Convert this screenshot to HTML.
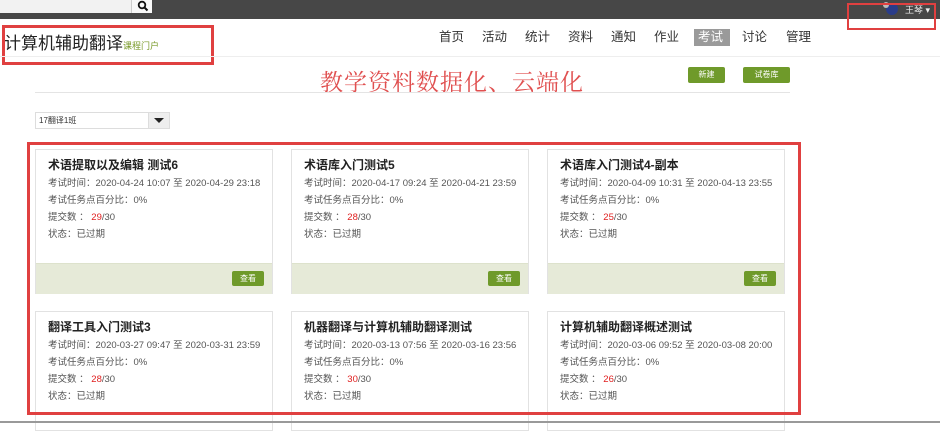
<!DOCTYPE html>
<html><head><meta charset="utf-8"><style>
*{margin:0;padding:0;box-sizing:border-box}
body{width:940px;height:424px;overflow:hidden;background:#fff;font-family:"Liberation Sans","Noto Sans CJK SC",sans-serif;position:relative;color:#333}
.a{position:absolute}
.top{left:0;top:0;width:940px;height:19px;background:#474747}
.card{position:absolute;width:238px;background:#fff;border:1px solid #e2e2e2}
.card h3{position:absolute;left:12px;top:6px;font-size:12px;font-weight:bold;color:#222}
.card p{position:absolute;left:12px;font-size:9.5px;color:#555;white-space:nowrap}
.card .r{color:#e02020}
.foot{position:absolute;left:0;right:0;top:113px;height:31px;background:#e6ead8;border-top:1px solid #dde2cc}
.btn{position:absolute;background:#6f9a2a;color:#fff;font-size:8px;text-align:center;border-radius:2px}
.nav{position:absolute;top:29px;font-size:12.5px;line-height:17px;color:#333}
</style></head><body>
<div class="a top"></div>
<div class="a" style="left:0;top:0;width:131px;height:13px;background:#f2f2f2"></div>
<div class="a" style="left:131px;top:0;width:21px;height:13px;background:#f8f8f8;border-left:1px solid #ccc"></div>
<svg class="a" style="left:136px;top:0" width="14" height="13"><circle cx="6" cy="5" r="3.3" fill="none" stroke="#111" stroke-width="1.8"/><path d="M8.5 7.5 L11.5 10.5" stroke="#111" stroke-width="2"/></svg>
<div class="a" style="left:886px;top:3px;width:12px;height:12px;border-radius:50%;background:#2a3c8a"></div>
<div class="a" style="left:883px;top:2px;width:6px;height:6px;border-radius:50%;background:#bbb"></div>
<div class="a" style="left:905px;top:3px;font-size:9px;color:#eee">王琴 ▾</div>
<div class="a" style="left:847px;top:3px;width:89px;height:27px;border:2px solid #e04040"></div>

<div class="a" style="left:4px;top:29px;font-size:17px;color:#222">计算机辅助翻译<span style="font-size:9px;color:#7a9a2a">课程门户</span></div>
<div class="a" style="left:2px;top:25px;width:212px;height:40px;border:3px solid #e04040"></div>

<div class="nav" style="left:439px">首页</div>
<div class="nav" style="left:482px">活动</div>
<div class="nav" style="left:525px">统计</div>
<div class="nav" style="left:568px">资料</div>
<div class="nav" style="left:611px">通知</div>
<div class="nav" style="left:654px">作业</div>
<div class="a" style="left:694px;top:29px;width:36px;height:17px;background:#9a9a9a"></div>
<div class="nav" style="left:698px;color:#fff">考试</div>
<div class="nav" style="left:742px">讨论</div>
<div class="nav" style="left:786px">管理</div>
<div class="a" style="left:0;top:56px;width:940px;height:1px;background:#eee"></div>

<div class="a" style="left:320px;top:64px;font-size:23px;color:#e05050;font-family:'Noto Serif CJK SC',serif;letter-spacing:1px">教学资料数据化、云端化</div>
<div class="btn" style="left:688px;top:67px;width:37px;height:16px;line-height:16px">新建</div>
<div class="btn" style="left:743px;top:67px;width:47px;height:16px;line-height:16px">试卷库</div>
<div class="a" style="left:35px;top:92px;width:755px;height:1px;background:#e4e4e4"></div>

<div class="a" style="left:35px;top:112px;width:135px;height:17px;border:1px solid #ddd;font-size:8px;line-height:15px;padding-left:3px">17翻译1班</div>
<div class="a" style="left:148px;top:112px;width:22px;height:17px;background:#eee;border:1px solid #ddd"></div>
<div class="a" style="left:154px;top:118px;width:0;height:0;border-left:5px solid transparent;border-right:5px solid transparent;border-top:5px solid #222"></div>

<div class="card" style="left:35px;top:149px;height:145px"><h3>术语提取以及编辑 测试6</h3><p style="top:25px">考试时间：2020-04-24 10:07 至 2020-04-29 23:18</p><p style="top:42px">考试任务点百分比：0%</p><p style="top:59px">提交数 ： <span class="r">29</span>/30</p><p style="top:76px">状态：已过期</p><div class="foot"></div><div class="btn" style="left:196px;top:121px;width:32px;height:15px;line-height:15px">查看</div></div>
<div class="card" style="left:291px;top:149px;height:145px"><h3>术语库入门测试5</h3><p style="top:25px">考试时间：2020-04-17 09:24 至 2020-04-21 23:59</p><p style="top:42px">考试任务点百分比：0%</p><p style="top:59px">提交数 ： <span class="r">28</span>/30</p><p style="top:76px">状态：已过期</p><div class="foot"></div><div class="btn" style="left:196px;top:121px;width:32px;height:15px;line-height:15px">查看</div></div>
<div class="card" style="left:547px;top:149px;height:145px"><h3>术语库入门测试4-副本</h3><p style="top:25px">考试时间：2020-04-09 10:31 至 2020-04-13 23:55</p><p style="top:42px">考试任务点百分比：0%</p><p style="top:59px">提交数 ： <span class="r">25</span>/30</p><p style="top:76px">状态：已过期</p><div class="foot"></div><div class="btn" style="left:196px;top:121px;width:32px;height:15px;line-height:15px">查看</div></div>

<div class="card" style="left:35px;top:311px;height:120px"><h3>翻译工具入门测试3</h3><p style="top:25px">考试时间：2020-03-27 09:47 至 2020-03-31 23:59</p><p style="top:42px">考试任务点百分比：0%</p><p style="top:59px">提交数 ： <span class="r">28</span>/30</p><p style="top:76px">状态：已过期</p></div>
<div class="card" style="left:291px;top:311px;height:120px"><h3>机器翻译与计算机辅助翻译测试</h3><p style="top:25px">考试时间：2020-03-13 07:56 至 2020-03-16 23:56</p><p style="top:42px">考试任务点百分比：0%</p><p style="top:59px">提交数 ： <span class="r">30</span>/30</p><p style="top:76px">状态：已过期</p></div>
<div class="card" style="left:547px;top:311px;height:120px"><h3>计算机辅助翻译概述测试</h3><p style="top:25px">考试时间：2020-03-06 09:52 至 2020-03-08 20:00</p><p style="top:42px">考试任务点百分比：0%</p><p style="top:59px">提交数 ： <span class="r">26</span>/30</p><p style="top:76px">状态：已过期</p></div>

<div class="a" style="left:27px;top:142px;width:774px;height:273px;border:3px solid #e04040"></div>
<div class="a" style="left:0;top:421px;width:940px;height:2px;background:#999"></div>
</body></html>
